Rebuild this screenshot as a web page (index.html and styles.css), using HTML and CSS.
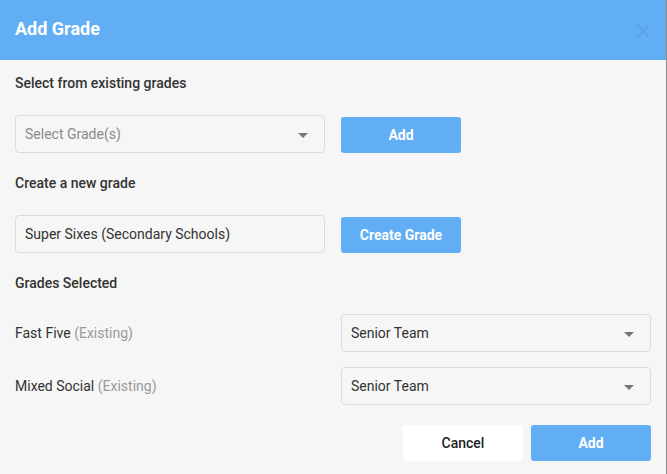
FILE: index.html
```html
<!DOCTYPE html>
<html lang="en">
<head>
  <meta charset="UTF-8" />
  <meta name="viewport" content="width=device-width, initial-scale=1.0" />
  <title>Add Grade</title>
  <link rel="stylesheet" href="styles.css">
</head>
<body>
  <div class="modal">
    <div class="modal-header">
      <h2>Add Grade</h2>
      <button class="close-btn" aria-label="Close">
        <svg width="14" height="14" viewBox="0 0 14 14"><path d="M1 1 L13 13 M13 1 L1 13" stroke="currentColor" stroke-width="2" fill="none"/></svg>
      </button>
    </div>

    <div class="modal-body">
      <div class="section-title">Select from existing grades</div>
      <div class="field-row">
        <div class="select placeholder">Select Grade(s)<span class="caret"></span></div>
        <button class="btn btn-primary">Add</button>
      </div>

      <div class="section-title">Create a new grade</div>
      <div class="field-row">
        <input class="text-input" type="text" value="Super Sixes (Secondary Schools)">
        <button class="btn btn-primary">Create Grade</button>
      </div>

      <div class="section-title grades-title">Grades Selected</div>
      <div class="grade-row">
        <div class="grade-name">Fast Five <span class="muted">(Existing)</span></div>
        <div class="select wide">Senior Team<span class="caret"></span></div>
      </div>
      <div class="grade-row">
        <div class="grade-name">Mixed Social <span class="muted">(Existing)</span></div>
        <div class="select wide">Senior Team<span class="caret"></span></div>
      </div>

      <div class="modal-footer">
        <button class="btn btn-light">Cancel</button>
        <button class="btn btn-primary">Add</button>
      </div>
    </div>
  </div>
</body>
</html>
```

FILE: styles.css
```css
* {
  box-sizing: border-box;
}
body {
  margin: 0;
  font-family: Roboto, 'Liberation Sans', sans-serif;
  background: #f6f6f6;
  color: #333;
}
.modal {
  width: 667px;
  min-height: 474px;
  background: #f6f6f6;
  border-right: 1px solid #8c8c8c;
}
.modal-header {
  height: 60px;
  background: #62aef4;
  display: flex;
  align-items: center;
  justify-content: space-between;
  padding: 0 16px 0 15px;
}
.modal-header h2 {
  margin: 0 0 3px;
  font-size: 18px;
  font-weight: 700;
  color: #fff;
}
.close-btn {
  background: none;
  border: none;
  padding: 0;
  color: #59a3e6;
  display: flex;
  margin-top: 1px;
}
.modal-body {
  padding: 13px 15px 13px;
}
.section-title {
  font-size: 14px;
  font-weight: 500;
  line-height: 20px;
  color: #333;
  margin-bottom: 22px;
}
.grades-title {
  margin-bottom: 21px;
}
.field-row {
  display: flex;
  align-items: flex-end;
  gap: 16px;
  margin-bottom: 20px;
}
.select,
.text-input {
  position: relative;
  width: 310px;
  height: 38px;
  border: 1px solid #dcdcdc;
  border-radius: 4px;
  background: #f6f6f6;
  padding: 0 9px;
  font-family: inherit;
  font-size: 14px;
  color: #333;
  display: flex;
  align-items: center;
}
.select.placeholder {
  color: #8a8a8a;
}
.caret {
  position: absolute;
  right: 16px;
  top: 17px;
  border-left: 5px solid transparent;
  border-right: 5px solid transparent;
  border-top: 5px solid #777;
}
.btn {
  width: 120px;
  height: 36px;
  border: none;
  border-radius: 3px;
  font-family: inherit;
  font-size: 14px;
  font-weight: 700;
  cursor: pointer;
}
.btn-primary {
  background: #62aef4;
  color: #fff;
}
.btn-light {
  background: #fff;
  color: #222;
  font-weight: 500;
}
.grade-row {
  display: flex;
  align-items: center;
  justify-content: space-between;
  margin-bottom: 15px;
}
.grade-name {
  font-size: 14px;
  color: #333;
}
.muted {
  color: #999;
}
.modal-footer {
  display: flex;
  justify-content: flex-end;
  gap: 8px;
  margin-top: 20px;
}
```
